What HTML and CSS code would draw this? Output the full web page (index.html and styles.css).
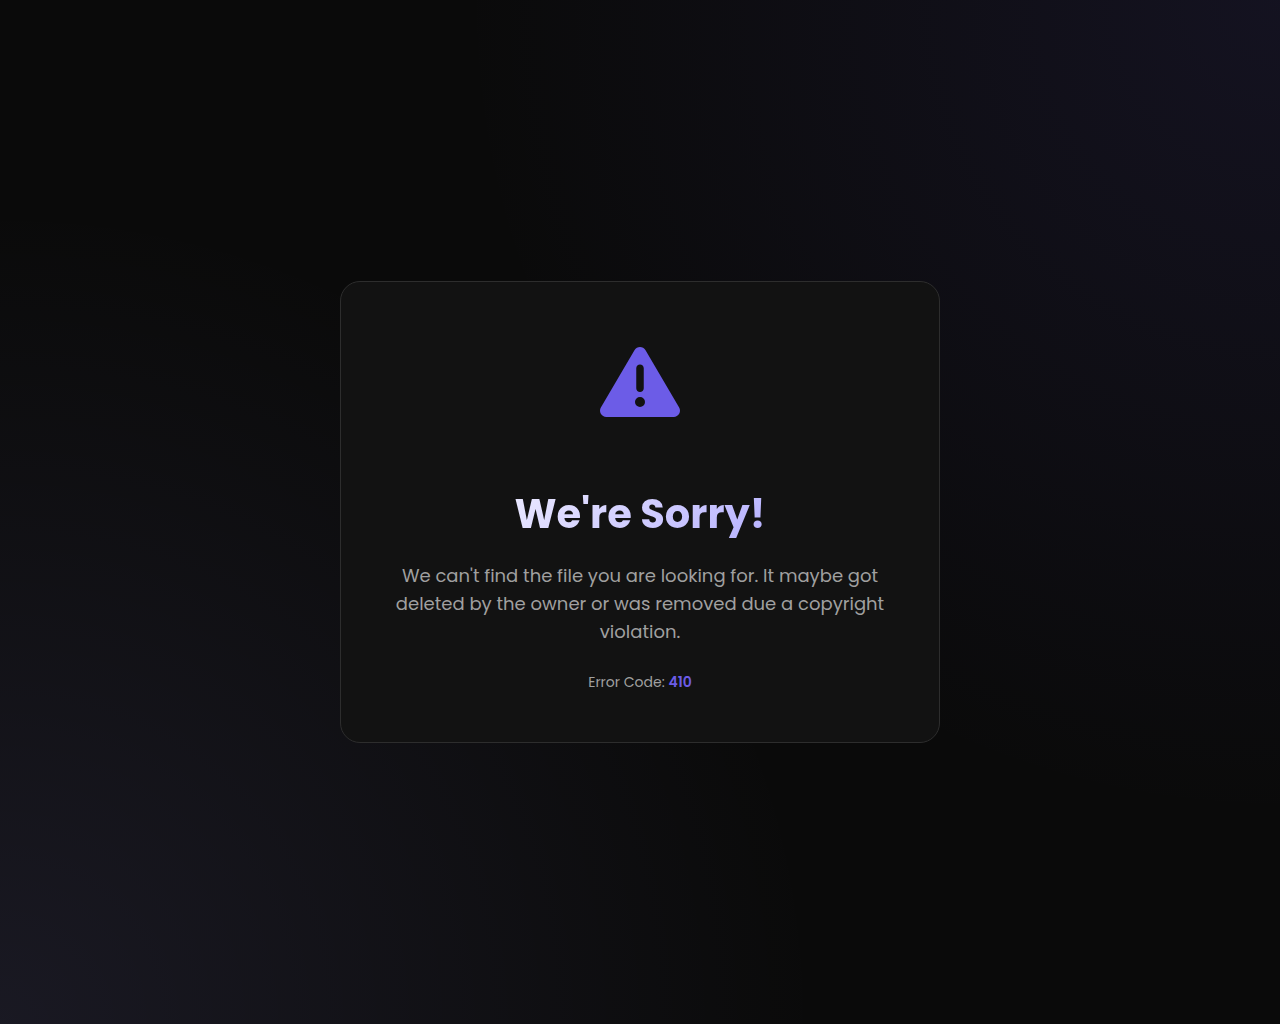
FILE: index.html
```html
<!DOCTYPE html>
<html lang="en">
<head>
    <meta charset="UTF-8">
    <meta name="viewport" content="width=device-width, initial-scale=1.0">
    <title>We're Sorry!</title>
    <link rel="stylesheet" href="styles.css">
</head>
<body>
    <main class="error-card">
        <svg class="error-icon" viewBox="0 0 512 512" aria-hidden="true">
            <path d="M256 32c14.200 0 27.300 7.500 34.500 19.800l216 368c7.300 12.400 7.300 27.700.2 40.100S486.300 480 472 480H40c-14.300 0-27.600-7.700-34.700-20.100s-7-27.800.2-40.100l216-368C228.700 39.500 241.800 32 256 32zm0 112c-13.300 0-24 10.700-24 24v128c0 13.300 10.700 24 24 24s24-10.700 24-24V168c0-13.300-10.700-24-24-24zm32 240a32 32 0 1 0-64 0 32 32 0 1 0 64 0z"/>
        </svg>
        <h1>We're Sorry!</h1>
        <p class="message">We can't find the file you are looking for. It maybe got deleted by the owner or was removed due a copyright violation.</p>
        <p class="error-code">Error Code: <span>410</span></p>
    </main>
</body>
</html>
```

FILE: styles.css
```css
* {
    margin: 0;
    padding: 0;
    box-sizing: border-box;
}

body {
    font-family: 'Poppins', 'Inter', sans-serif;
    min-height: 100vh;
    display: flex;
    align-items: center;
    justify-content: center;
    color: #a0a0a0;
    background-color: #0a0a0a;
    background-image:
        radial-gradient(circle at top right, rgba(108, 92, 231, 0.1) 0%, transparent 50%),
        radial-gradient(circle at bottom left, rgba(162, 155, 254, 0.1) 0%, transparent 50%);
}

.error-card {
    width: 90%;
    max-width: 600px;
    padding: 60px 50px 48px;
    text-align: center;
    background: #121212;
    border: 1px solid #2d2d2d;
    border-radius: 20px;
}

.error-icon {
    display: block;
    width: 80px;
    height: 80px;
    margin: 0 auto 68px;
    fill: #6c5ce7;
}

h1 {
    font-size: 40px;
    line-height: 48px;
    font-weight: 700;
    margin-bottom: 24px;
    background: linear-gradient(135deg, #fff, #a29bfe);
    -webkit-background-clip: text;
    background-clip: text;
    color: transparent;
}

.message {
    font-size: 18px;
    line-height: 28px;
    margin-bottom: 24px;
}

.error-code {
    font-size: 14px;
    line-height: 24px;
}

.error-code span {
    color: #6c5ce7;
    font-weight: 600;
}
```
